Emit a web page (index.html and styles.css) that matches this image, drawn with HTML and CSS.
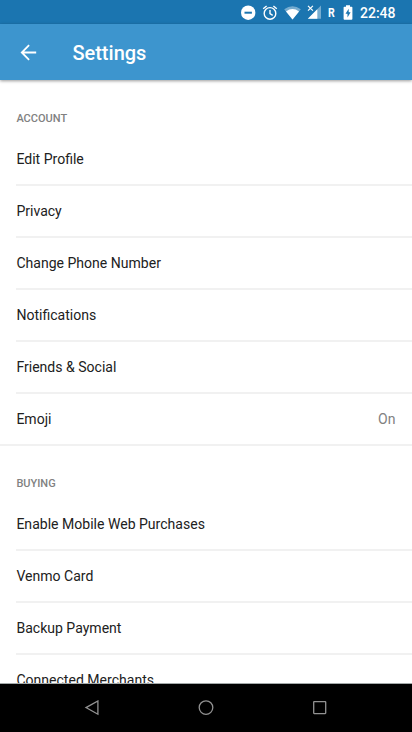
FILE: index.html
```html
<!DOCTYPE html>
<html lang="en">
<head>
<meta charset="utf-8">
<title>Settings</title>
<link rel="stylesheet" href="styles.css">
</head>
<body>
<div class="screen">
  <div class="status">
    <svg class="dnd" width="16" height="16" viewBox="0 0 16 16"><circle cx="8.2" cy="7.7" r="7.2" fill="#fff"/><path d="M4.5 7.7h7.4" stroke="#1b75b0" stroke-width="2"/></svg>
    <svg class="alarm" width="16" height="16" viewBox="0 0 16 16" fill="none" stroke="#fff" stroke-width="1.4"><circle cx="8" cy="8.4" r="5.8"/><path d="M1.2 3.8 4.6 1M14.8 3.8 11.4 1M8 5v3.7l2.7 1.6"/></svg>
    <svg class="wifi" width="18" height="14" viewBox="0 0 18 14"><path d="M.2 3.2Q8.5-2.8 16.8 3.2L8.5 13.4Z" fill="#fff" opacity=".4"/><path d="M2 5.4Q8.5.8 15 5.4L8.5 13.4Z" fill="#fff"/></svg>
    <svg class="signal" width="15" height="15" viewBox="0 0 15 15"><path d="M14 .5v13.2H.8Z" fill="#fff" opacity=".4"/><path d="M10.3 4.2v9.5H.8Z" fill="#fff"/><path d="m1 .8 4.9 4.9M5.9.8 1 5.7" stroke="#fff" stroke-width="1.2"/></svg>
    <span class="roaming">R</span>
    <svg class="battery" width="10" height="16" viewBox="0 0 10 16"><path d="M3 .2h4v1.5h1.5q.9 0 .9.9v11.2q0 .9-.9.9H1.5q-.9 0-.9-.9V2.6q0-.9.9-.9H3Z" fill="#fff"/><path d="M5.7 3.8 2.5 8.8h2v3.6l3.1-5.2H5.7Z" fill="#1b75b0"/></svg>
    <span class="clock">22:48</span>
  </div>
  <header class="appbar">
    <svg width="18" height="18" viewBox="0 0 18 18" fill="none" stroke="#fff" stroke-width="1.8"><path d="M16.2 8.5H2.2M9.1 1.2 1.8 8.5l7.3 7.3"/></svg>
    <h1>Settings</h1>
  </header>
  <main class="content">
    <section class="group">
      <h2>ACCOUNT</h2>
      <div class="row">Edit Profile</div>
      <div class="row">Privacy</div>
      <div class="row">Change Phone Number</div>
      <div class="row">Notifications</div>
      <div class="row">Friends &amp; Social</div>
      <div class="row last"><span>Emoji</span><span class="value">On</span></div>
    </section>
    <section class="group buying">
      <h2>BUYING</h2>
      <div class="row">Enable Mobile Web Purchases</div>
      <div class="row">Venmo Card</div>
      <div class="row">Backup Payment</div>
      <div class="row">Connected Merchants</div>
    </section>
  </main>
  <nav class="navbar">
    <svg width="16" height="16" viewBox="0 0 16 16"><path d="M13.9 1v13.2L2 7.6Z"/></svg>
    <svg width="16" height="16" viewBox="0 0 16 16"><circle cx="8" cy="7.6" r="6.8"/></svg>
    <svg width="16" height="16" viewBox="0 0 16 16"><rect x="1.7" y="1.6" width="12" height="12" rx=".5"/></svg>
  </nav>
</div>
</body>
</html>
```
FILE: styles.css
```css
* { box-sizing: border-box; }
body { margin: 0; font-family: Roboto, sans-serif; background: #fff; }
svg { display: block; flex: none; }
h1, h2 { margin: 0; font-weight: 500; }

.screen { display: flex; flex-direction: column; width: 412px; height: 732px; overflow: hidden; }

.status {
  display: flex;
  align-items: center;
  flex: none;
  height: 24px;
  padding: 1px 16px 0 240px;
  background: #1b75b0;
  color: #fff;
}
.alarm { margin-left: 6px; }
.wifi { margin-left: 6px; }
.signal { margin-left: 5px; }
.roaming { width: 8px; margin-left: 6px; font-size: 12px; font-weight: 700; transform: scaleX(.88); transform-origin: left; }
.battery { margin-left: 7px; }
.clock { margin-left: 7px; padding-top: 1px; font-size: 14px; font-weight: 500; white-space: nowrap; }

.appbar {
  display: flex;
  align-items: center;
  flex: none;
  height: 56px;
  padding: 1px 20px 0;
  background: #3d95ce;
  color: #fff;
  box-shadow: 0 1px 3px rgba(0, 0, 0, .4);
  z-index: 1;
}
.appbar h1 { margin-left: 34.4px; font-size: 20px; line-height: 24px; }

.content { flex: 1; min-height: 0; overflow: hidden; border-bottom: 1px solid #a3a9a9; }
.group h2 {
  height: 54px;
  padding: 31px 16px 0 16.4px;
  color: #818181;
  font-size: 11px;
  line-height: 16px;
}
.buying h2 { height: 53px; padding-top: 30px; }
.row {
  display: flex;
  justify-content: space-between;
  height: 52px;
  margin-left: 16px;
  padding: 15px 16.5px 0 .4px;
  border-bottom: 2px solid #f1f1f1;
  color: #212121;
  font-size: 14.05px;
  line-height: 21px;
}
.last { margin-left: 0; padding-left: 16.4px; }
.value { color: #818181; }

.navbar {
  display: flex;
  align-items: center;
  justify-content: center;
  gap: 98px;
  flex: none;
  height: 48px;
  background: #000;
}
.navbar path, .navbar circle, .navbar rect { fill: none; stroke: #929292; stroke-width: 1.3; }
```
